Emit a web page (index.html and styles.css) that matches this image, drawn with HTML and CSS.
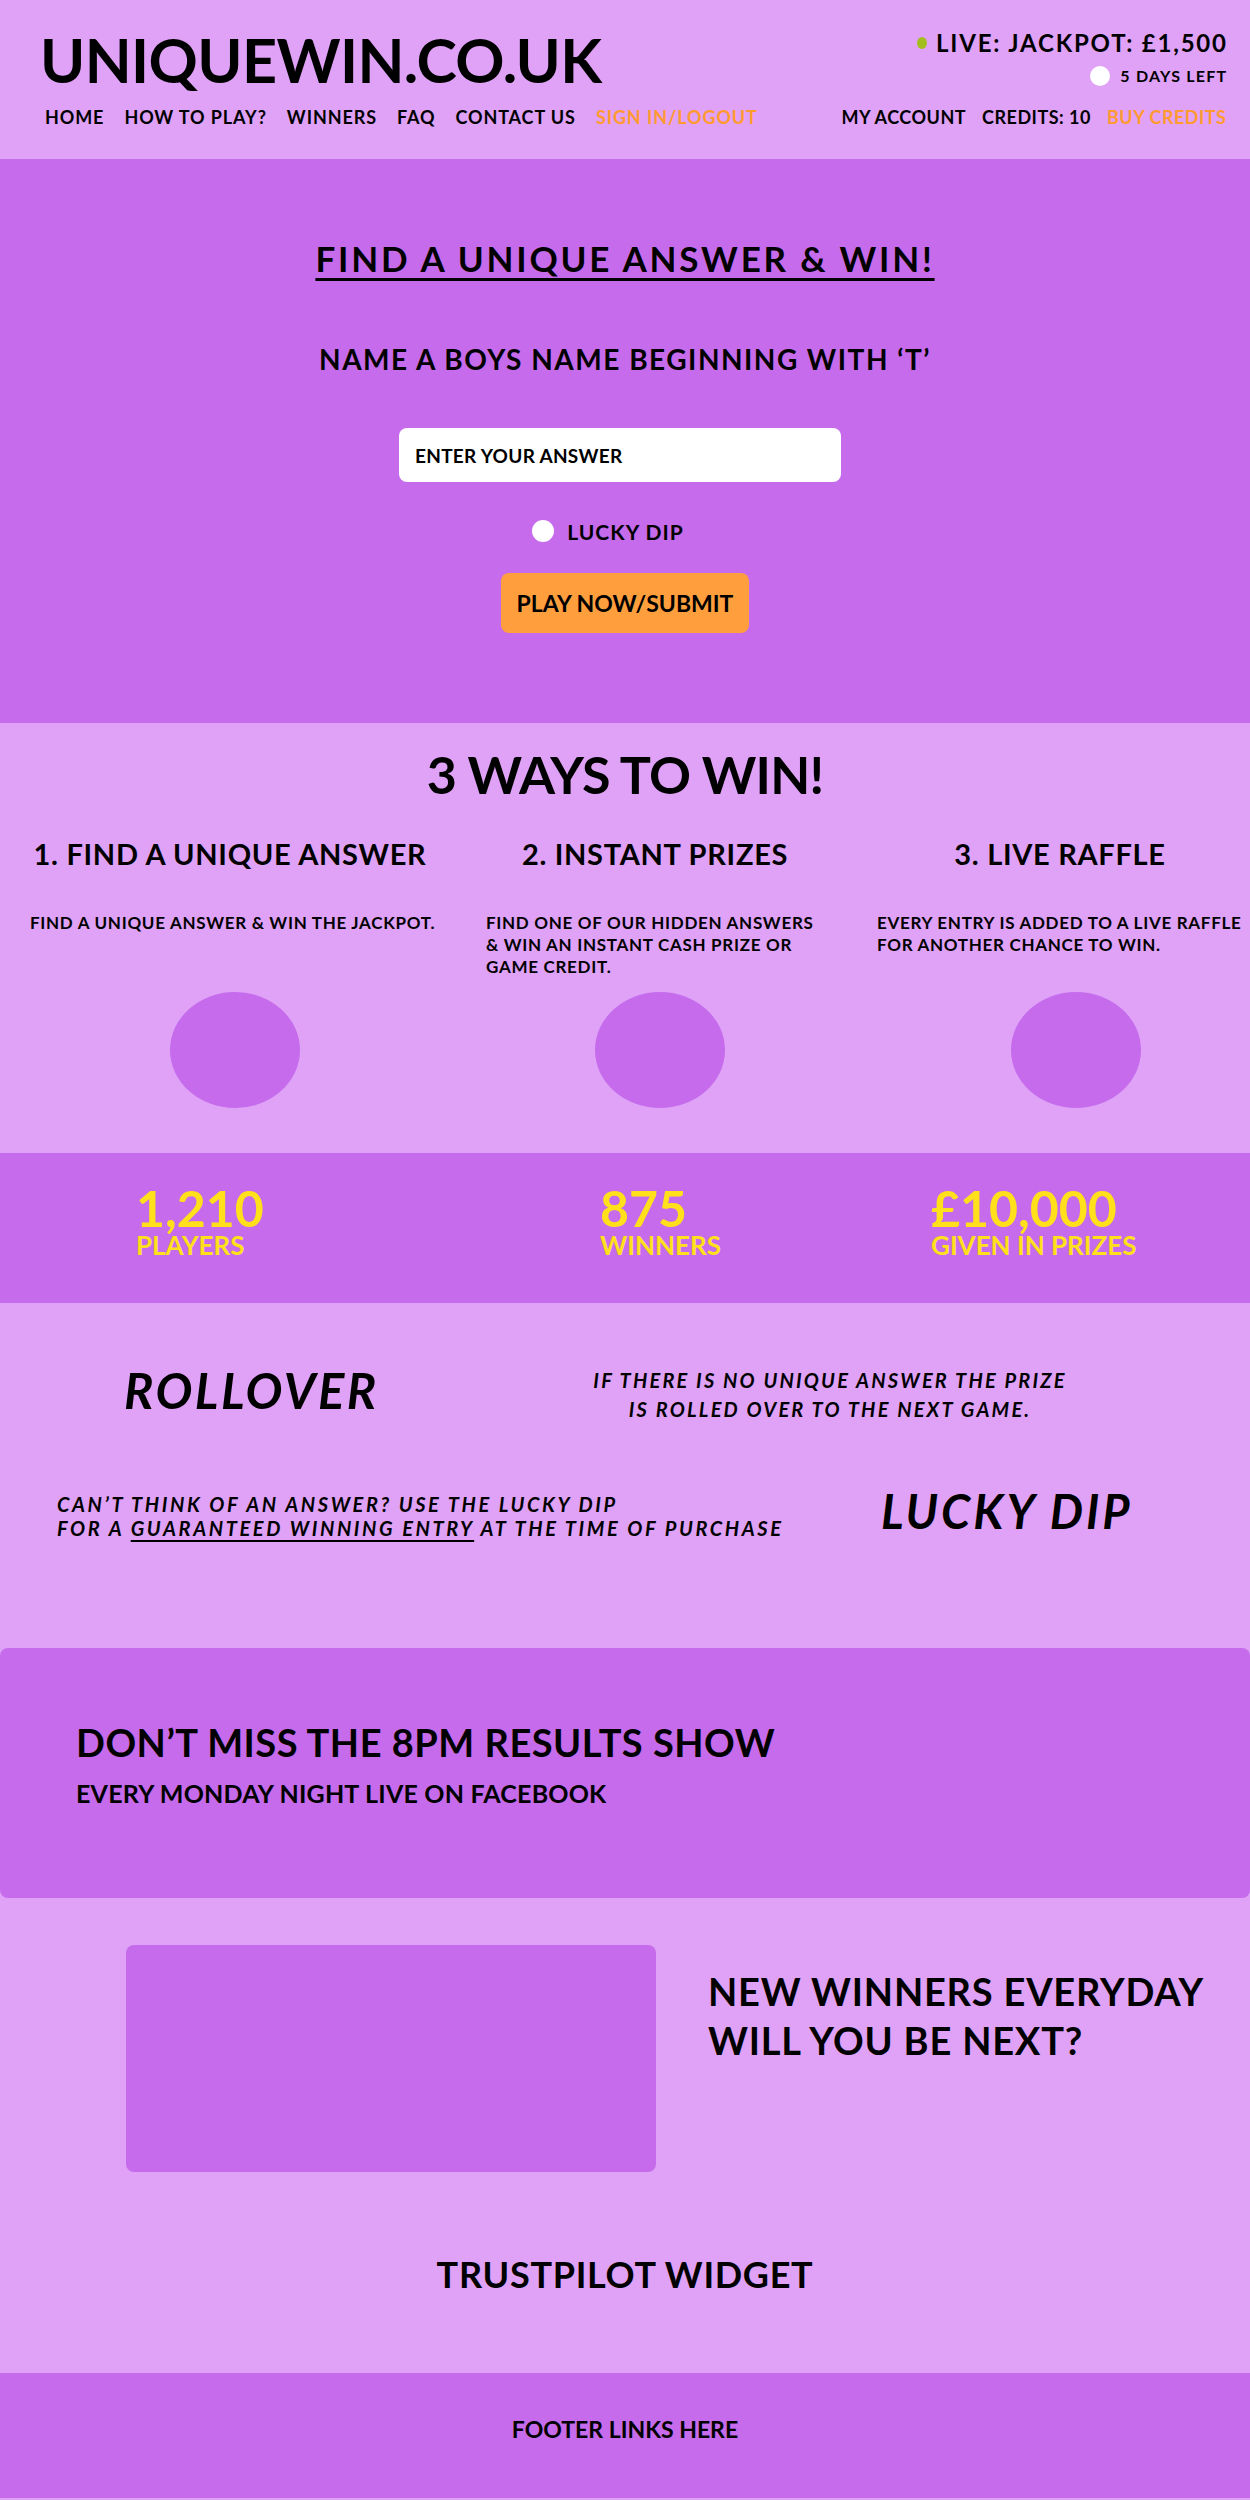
FILE: index.html
```html
<!DOCTYPE html>
<html lang="en">
<head>
<meta charset="UTF-8">
<meta name="viewport" content="width=device-width, initial-scale=1.0">
<title>UniqueWin.co.uk</title>
<link rel="stylesheet" href="styles.css">
</head>
<body>

<header class="site-header">
    <div class="header-top">
        <div class="logo">UNIQUEWIN.CO.UK</div>
        <div class="status">
            <div class="jackpot"><span class="live-dot"></span>LIVE: JACKPOT: £1,500</div>
            <div class="days"><span class="days-dot"></span>5 DAYS LEFT</div>
        </div>
    </div>
    <div class="header-nav">
        <nav class="main-nav">
            <a href="#">HOME</a>
            <a href="#">HOW TO PLAY?</a>
            <a href="#">WINNERS</a>
            <a href="#">FAQ</a>
            <a href="#">CONTACT US</a>
            <a href="#" class="highlight">SIGN IN/LOGOUT</a>
        </nav>
        <nav class="account-nav">
            <a href="#">MY ACCOUNT</a>
            <span>CREDITS: 10</span>
            <a href="#" class="highlight">BUY CREDITS</a>
        </nav>
    </div>
</header>

<section class="hero">
    <h1 class="hero-title">FIND A UNIQUE ANSWER &amp; WIN!</h1>
    <h2 class="question">NAME A BOYS NAME BEGINNING WITH ‘T’</h2>
    <form class="answer-form">
        <input type="text" class="answer-input" placeholder="ENTER YOUR ANSWER">
        <label class="lucky-dip"><span class="radio"></span>LUCKY DIP</label>
        <button type="submit" class="play-btn">PLAY NOW/SUBMIT</button>
    </form>
</section>

<section class="ways">
    <h2 class="ways-title">3 WAYS TO WIN!</h2>
    <div class="ways-grid">
        <div class="way way-1">
            <h3>1. FIND A UNIQUE ANSWER</h3>
            <p>FIND A UNIQUE ANSWER &amp; WIN THE JACKPOT.</p>
            <div class="way-icon"></div>
        </div>
        <div class="way way-2">
            <h3>2. INSTANT PRIZES</h3>
            <p>FIND ONE OF OUR HIDDEN ANSWERS<br>&amp; WIN AN INSTANT CASH PRIZE OR<br>GAME CREDIT.</p>
            <div class="way-icon"></div>
        </div>
        <div class="way way-3">
            <h3>3. LIVE RAFFLE</h3>
            <p>EVERY ENTRY IS ADDED TO A LIVE RAFFLE<br>FOR ANOTHER CHANCE TO WIN.</p>
            <div class="way-icon"></div>
        </div>
    </div>
</section>

<section class="stats">
    <div class="stat">
        <div class="stat-num">1,210</div>
        <div class="stat-label">PLAYERS</div>
    </div>
    <div class="stat">
        <div class="stat-num">875</div>
        <div class="stat-label">WINNERS</div>
    </div>
    <div class="stat">
        <div class="stat-num">£10,000</div>
        <div class="stat-label">GIVEN IN PRIZES</div>
    </div>
</section>

<section class="features">
    <div class="feature-row rollover">
        <h2 class="feature-name">ROLLOVER</h2>
        <p class="feature-text">IF THERE IS NO UNIQUE ANSWER THE PRIZE<br>IS ROLLED OVER TO THE NEXT GAME.</p>
    </div>
    <div class="feature-row lucky">
        <p class="feature-text">CAN’T THINK OF AN ANSWER? USE THE LUCKY DIP<br>FOR A <u>GUARANTEED WINNING ENTRY</u> AT THE TIME OF PURCHASE</p>
        <h2 class="feature-name">LUCKY DIP</h2>
    </div>
</section>

<section class="show">
    <h2>DON’T MISS THE 8PM RESULTS SHOW</h2>
    <p>EVERY MONDAY NIGHT LIVE ON FACEBOOK</p>
</section>

<section class="winners">
    <div class="winners-row">
        <div class="winners-image"></div>
        <h2>NEW WINNERS EVERYDAY<br>WILL YOU BE NEXT?</h2>
    </div>
    <h2 class="trustpilot">TRUSTPILOT WIDGET</h2>
</section>

<footer class="site-footer">
    FOOTER LINKS HERE
</footer>

</body>
</html>
```

FILE: styles.css
```css
body {
    font-family: "Lato", "Noto Sans", sans-serif;
    font-weight: 700;
    margin: 0;
    padding: 0;
    background-color: #dfa2f7;
    color: #000;
}
h1, h2, h3, p {
    margin: 0;
    font-weight: 700;
}
a {
    color: #000;
    text-decoration: none;
}
.highlight {
    color: #ff9a30;
}

/* header */
.site-header {
    padding: 29px 24px 33px 40px;
}
.header-top {
    display: flex;
    justify-content: space-between;
    align-items: flex-start;
}
.logo {
    font-size: 61px;
    line-height: 1;
    letter-spacing: -0.6px;
}
.status {
    display: flex;
    flex-direction: column;
    align-items: flex-end;
    padding-top: 2px;
}
.jackpot {
    display: flex;
    align-items: center;
    gap: 9px;
    font-size: 24px;
    line-height: 1;
    letter-spacing: 1.8px;
    margin-right: -1.8px;
}
.live-dot {
    width: 10px;
    height: 12px;
    border-radius: 50%;
    background-color: #a3bd1e;
}
.days {
    display: flex;
    align-items: center;
    gap: 10px;
    margin-top: 11px;
    font-size: 16px;
    line-height: 1;
    letter-spacing: 1.2px;
    margin-right: -1.2px;
}
.days-dot {
    width: 20px;
    height: 20px;
    border-radius: 50%;
    background-color: #fff;
}
.header-nav {
    display: flex;
    justify-content: space-between;
    margin-top: 18px;
    padding-left: 5px;
    font-size: 18px;
    line-height: 1;
    letter-spacing: 0.9px;
}
.main-nav, .account-nav {
    display: flex;
    gap: 20px;
}
.account-nav {
    gap: 16px;
    letter-spacing: 0.5px;
    margin-right: -0.5px;
}

/* hero */
.hero {
    background-color: #c56beb;
    height: 564px;
    box-sizing: border-box;
    padding-top: 82px;
    display: flex;
    flex-direction: column;
    align-items: center;
}
.hero-title {
    font-size: 35px;
    line-height: 1;
    letter-spacing: 2.8px;
    text-decoration: underline;
    text-decoration-thickness: 3px;
    text-underline-offset: 6px;
}
.question {
    font-size: 28px;
    line-height: 1;
    margin-top: 69px;
    letter-spacing: 1.5px;
}
.answer-form {
    display: flex;
    flex-direction: column;
    align-items: center;
    margin-top: 55px;
}
.answer-input {
    width: 442px;
    height: 54px;
    box-sizing: border-box;
    border: none;
    border-radius: 8px;
    padding: 0 16px;
    font-family: inherit;
    font-weight: 700;
    font-size: 19px;
    letter-spacing: 0.3px;
    background-color: #fff;
    margin-left: -10px;
}
.answer-input::placeholder {
    color: #000;
}
.lucky-dip {
    display: flex;
    align-items: center;
    gap: 13px;
    margin-top: 38px;
    margin-right: 34px;
    font-size: 21px;
    line-height: 1;
    letter-spacing: 1px;
}
.radio {
    width: 22px;
    height: 22px;
    border-radius: 50%;
    background-color: #fff;
}
.play-btn {
    width: 248px;
    height: 60px;
    margin-top: 31px;
    border: none;
    border-radius: 8px;
    background-color: #ff9e3d;
    font-family: inherit;
    font-weight: 700;
    font-size: 23px;
    color: #000;
    cursor: pointer;
}

/* 3 ways */
.ways {
    padding: 25px 0 45px;
}
.ways-title {
    font-size: 52px;
    line-height: 1;
    letter-spacing: -0.8px;
    text-align: center;
}
.ways-grid {
    display: grid;
    grid-template-columns: 420px 430px 1fr;
    padding-left: 20px;
    margin-top: 39px;
}
.way h3 {
    font-size: 29px;
    line-height: 1;
    letter-spacing: 0.7px;
    text-align: center;
}
.way p {
    font-size: 17px;
    line-height: 22px;
    letter-spacing: 0.7px;
    margin-top: 44px;
    min-height: 66px;
}
.way-1 p { padding-left: 10px; }
.way-2 p { padding-left: 46px; }
.way-3 p { padding-left: 7px; }
.way-icon {
    width: 130px;
    height: 116px;
    border-radius: 50%;
    background-color: #c56beb;
    margin: 14px auto 0;
    position: relative;
    left: 5px;
}
.way-3 .way-icon {
    left: 16px;
}

/* stats */
.stats {
    background-color: #c56beb;
    display: grid;
    grid-template-columns: 464px 331px 1fr;
    height: 150px;
    box-sizing: border-box;
    padding: 32px 0 0 136px;
    color: #ffe01a;
}
.stat-num {
    font-size: 50px;
    line-height: 46px;
}
.stat-label {
    font-size: 26px;
    line-height: 22px;
    margin-top: 3px;
}

/* rollover / lucky dip */
.features {
    padding: 63px 0 108px;
    font-style: italic;
}
.feature-row {
    display: grid;
    align-items: start;
}
.rollover {
    grid-template-columns: 590px 480px;
}
.rollover .feature-name {
    padding-left: 124px;
    font-size: 49px;
    line-height: 1;
    letter-spacing: 2.5px;
}
.rollover .feature-text {
    font-size: 20px;
    line-height: 29px;
    letter-spacing: 2.2px;
    text-align: center;
    white-space: nowrap;
}
.lucky {
    grid-template-columns: 881px 1fr;
    margin-top: 68px;
}
.lucky .feature-text {
    padding-left: 57px;
    font-size: 20px;
    line-height: 24px;
    letter-spacing: 2.6px;
    white-space: nowrap;
}
.lucky .feature-text u {
    text-decoration-thickness: 2px;
    text-underline-offset: 4px;
}
.lucky .feature-name {
    font-size: 47px;
    line-height: 1;
    letter-spacing: 3px;
    margin-top: -4px;
}

/* results show */
.show {
    background-color: #c56beb;
    border-radius: 8px;
    height: 250px;
    box-sizing: border-box;
    padding: 75px 0 0 76px;
}
.show h2 {
    font-size: 38px;
    line-height: 1;
    letter-spacing: 0.5px;
}
.show p {
    font-size: 25px;
    line-height: 1;
    letter-spacing: 0.2px;
    margin-top: 20px;
}

/* winners */
.winners {
    padding: 47px 0 81px;
}
.winners-row {
    display: flex;
    gap: 52px;
    padding-left: 126px;
}
.winners-image {
    width: 530px;
    height: 227px;
    border-radius: 8px;
    background-color: #c56beb;
}
.winners-row h2 {
    font-size: 38px;
    line-height: 49px;
    letter-spacing: 0.8px;
    margin-top: 22px;
}
.trustpilot {
    font-size: 36px;
    line-height: 1;
    letter-spacing: 0.7px;
    text-align: center;
    margin-top: 84px;
}

/* footer */
.site-footer {
    background-color: #c56beb;
    height: 125px;
    box-sizing: border-box;
    padding-top: 45px;
    text-align: center;
    font-size: 23px;
    line-height: 1;
}
```
